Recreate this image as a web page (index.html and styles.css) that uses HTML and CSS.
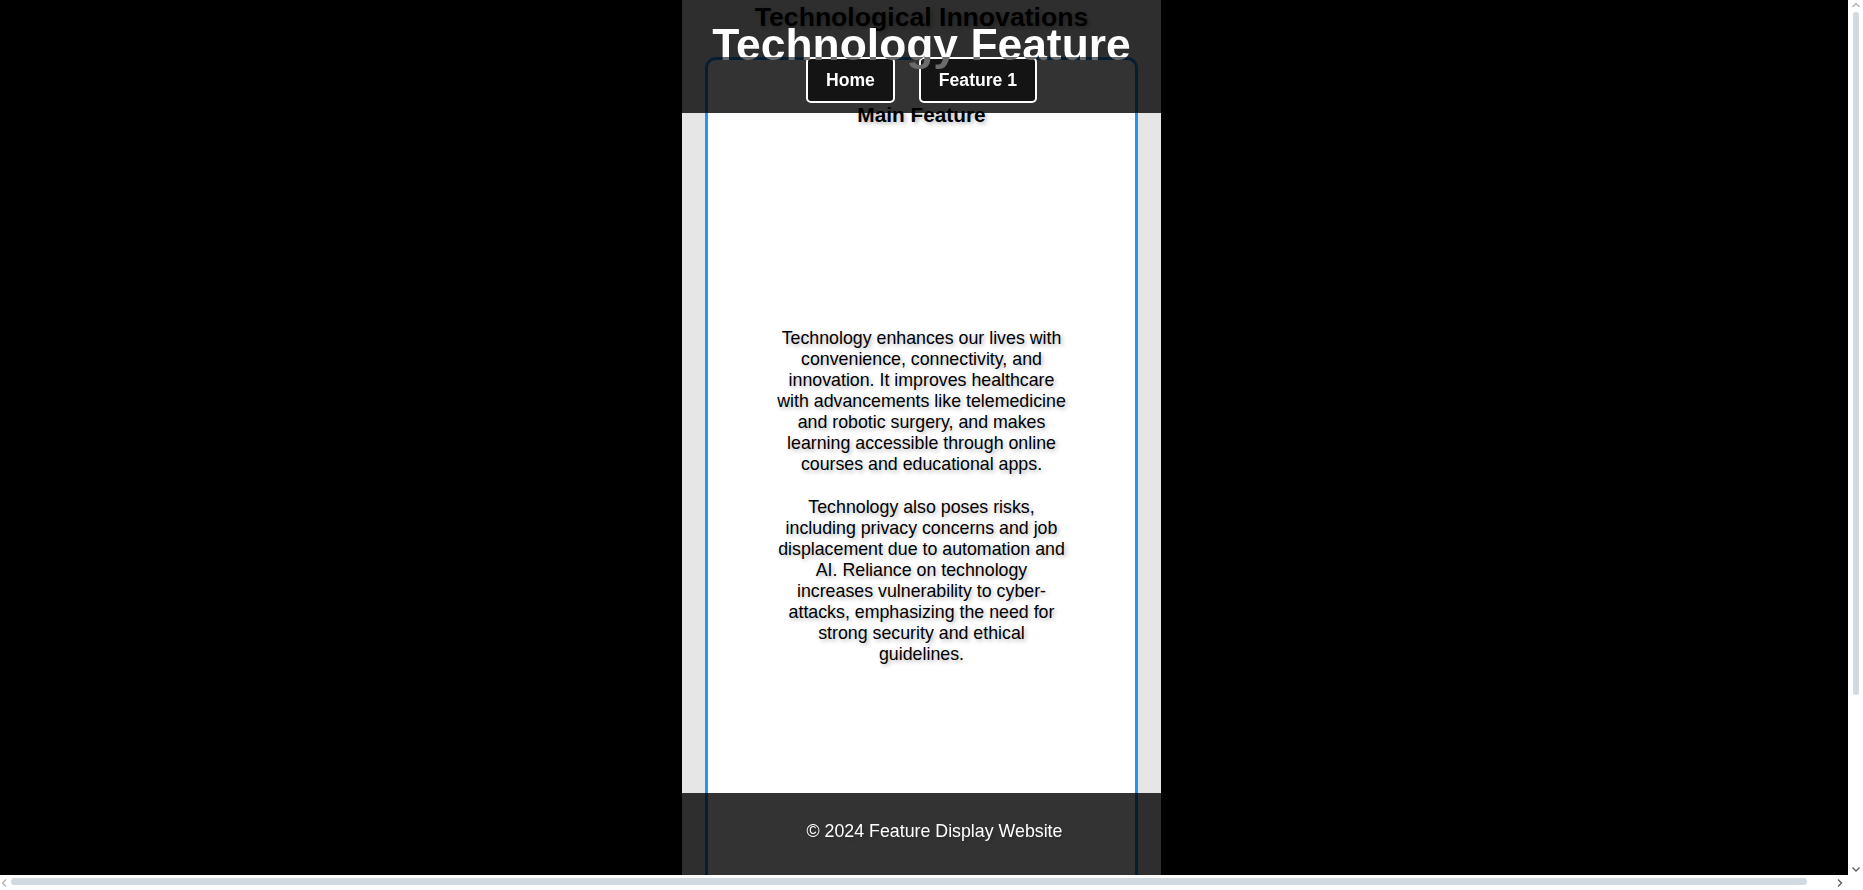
FILE: index.html
```html
<!DOCTYPE html>
<html lang="en">
<head>
<meta charset="utf-8">
<title>Technology Feature</title>
<link rel="stylesheet" href="styles.css">
</head>
<body>
<div class="window">
  <div class="viewport">
    <div class="page">
      <header class="site-header">
        <h1 class="site-title">Technology Feature</h1>
        <nav class="nav">
          <a class="nav-link" href="#">Home</a>
          <a class="nav-link" href="#">Feature 1</a>
        </nav>
      </header>

      <main class="content">
        <h2 class="section-title">Technological Innovations</h2>
        <article class="feature-card">
          <h3 class="feature-title">Main Feature</h3>
          <div class="feature-media"></div>
          <p class="feature-text">Technology enhances our lives with convenience, connectivity, and innovation. It improves healthcare with advancements like telemedicine and robotic surgery, and makes learning accessible through online courses and educational apps.</p>
          <p class="feature-text">Technology also poses risks, including privacy concerns and job displacement due to automation and AI. Reliance on technology increases vulnerability to cyber-attacks, emphasizing the need for strong security and ethical guidelines.</p>
        </article>
      </main>

      <footer class="site-footer">
        <p class="copyright">&copy; 2024 Feature Display Website</p>
      </footer>
    </div>
  </div>

  <div class="scrollbar scrollbar-v">
    <span class="sb-btn sb-btn-v">
      <svg width="15" height="12" viewBox="0 0 15 12"><path d="M4.5 7 L8 3.5 L11.5 7" fill="none" stroke="#b4b4b4" stroke-width="1.4"/></svg>
    </span>
    <div class="sb-track sb-track-v"><div class="sb-thumb sb-thumb-v"></div></div>
    <span class="sb-btn sb-btn-v">
      <svg width="15" height="12" viewBox="0 0 15 12"><path d="M4.5 4.5 L8 8 L11.5 4.5" fill="none" stroke="#5f5f5f" stroke-width="1.4"/></svg>
    </span>
  </div>

  <div class="scrollbar scrollbar-h">
    <span class="sb-btn sb-btn-h">
      <svg width="10" height="15" viewBox="0 0 10 15"><path d="M6 4.5 L2.5 8 L6 11.5" fill="none" stroke="#b4b4b4" stroke-width="1.4"/></svg>
    </span>
    <div class="sb-track sb-track-h"><div class="sb-thumb sb-thumb-h"></div></div>
    <span class="sb-btn sb-btn-h sb-btn-end">
      <svg width="12" height="15" viewBox="0 0 12 15"><path d="M2 4.5 L5.5 8 L2 11.5" fill="none" stroke="#5f5f5f" stroke-width="1.4"/></svg>
    </span>
  </div>

  <div class="scrollbar-corner"></div>
</div>
</body>
</html>
```

FILE: styles.css
```css
html,
body {
  height: 100%;
  margin: 0;
  overflow: hidden;
  background: #000;
}

body {
  font-family: "Liberation Sans", Arial, sans-serif;
  color: #000;
}

/* Browser window: viewport + scrollbars */
.window {
  display: grid;
  grid-template-columns: 1fr 15px;
  grid-template-rows: 1fr 15px;
  height: 100vh;
}

.viewport {
  overflow: hidden;
  background: #000;
}

.page {
  width: 479px;
  min-height: 1086px;
  margin-left: 682px;
  background: #e6e6e6;
}

/* Header (fixed, translucent) */
.site-header {
  position: fixed;
  top: 0;
  left: 682px;
  width: 479px;
  height: 113px;
  box-sizing: border-box;
  padding-top: 19px;
  background: rgba(0, 0, 0, 0.8);
  text-align: center;
  z-index: 10;
}

.site-title {
  position: relative;
  z-index: 2;
  margin: 0;
  font-size: 44.4px;
  font-weight: bold;
  line-height: 51px;
  color: transparent;
  background: linear-gradient(to bottom, #fff 0 38px, #6b6b6b 38px);
  -webkit-background-clip: text;
  background-clip: text;
}

.nav {
  position: relative;
  z-index: 1;
  display: flex;
  justify-content: center;
  gap: 24px;
  margin-top: -13px;
}

.nav-link {
  display: block;
  padding: 11px 18px;
  border: 2px solid #fff;
  border-radius: 5px;
  background: #141414;
  color: #fff;
  font-size: 17.6px;
  font-weight: bold;
  line-height: 20px;
  text-decoration: none;
}

/* Main content */
.content {
  padding-bottom: 26px;
}

.section-title {
  margin: 0 0 24px;
  padding-top: 2px;
  font-size: 26.6px;
  font-weight: bold;
  line-height: 31px;
  text-align: center;
  text-shadow: 2px 2px 4px rgba(0, 0, 0, 0.3);
}

.feature-card {
  margin: 0 23px;
  padding: 20px 20px 370px;
  border: 3px solid #2196f3;
  border-radius: 11px;
  background: #fff;
}

.feature-title {
  margin: 23px 0 20px;
  font-size: 20.8px;
  font-weight: bold;
  line-height: 24px;
  text-align: center;
  text-shadow: 2px 2px 4px rgba(0, 0, 0, 0.3);
}

.feature-media {
  height: 159px;
}

.feature-text {
  width: 291px;
  margin: 22px auto;
  font-size: 17.8px;
  line-height: 21px;
  text-align: center;
  text-shadow: 2px 2px 4px rgba(0, 0, 0, 0.3);
}

/* Footer (fixed, translucent) */
.site-footer {
  position: fixed;
  bottom: 15px;
  left: 682px;
  width: 479px;
  height: 82px;
  box-sizing: border-box;
  padding: 27px 0 0 26px;
  background: rgba(0, 0, 0, 0.8);
  text-align: center;
  z-index: 10;
}

.copyright {
  margin: 0;
  color: #fff;
  font-size: 17.8px;
  line-height: 22px;
  text-shadow: 2px 2px 4px rgba(0, 0, 0, 0.3);
}

/* Scrollbars */
.scrollbar {
  display: flex;
  background: #fff;
}

.scrollbar-v {
  flex-direction: column;
}

.scrollbar-h {
  flex-direction: row;
}

.sb-btn {
  display: block;
  flex: none;
}

.sb-btn svg {
  display: block;
}

.sb-track {
  flex: 1;
  display: flex;
}

.sb-track-v {
  flex-direction: column;
  padding: 0 4px 0 5px;
}

.sb-track-h {
  padding: 3px 0 5px 1px;
}

.sb-thumb {
  background: #d1dae1;
  border-radius: 4px;
}

.sb-thumb-v {
  height: 683px;
}

.sb-thumb-h {
  width: 1796px;
}

.scrollbar-corner {
  background: #fff;
}
```
